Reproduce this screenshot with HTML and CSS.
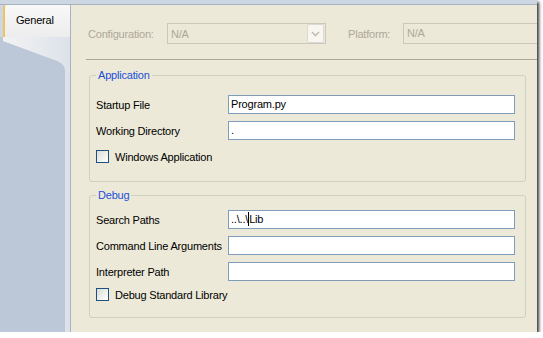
FILE: index.html
```html
<!DOCTYPE html>
<html lang="en">
<head>
  <meta charset="UTF-8" />
  <title>Project Properties - General</title>
  <link rel="stylesheet" href="styles.css">
</head>
<body>

  <div class="window">
    <!-- thin strip above the property page -->
    <div class="topbar"></div>

    <div class="frame">
      <!-- left tab column -->
      <aside class="side">
        <div class="tab">General</div>
        <svg class="tab-foot" width="70" height="36" viewBox="0 0 70 36">
          <defs>
            <linearGradient id="foot" x1="0" y1="0" x2="1" y2="0">
              <stop offset="0" stop-color="#f3f3f3" />
              <stop offset="1" stop-color="#dde2ea" />
            </linearGradient>
          </defs>
          <rect x="0" y="0" width="70" height="36" fill="url(#foot)" />
          <path d="M0 0 L3 0 L3 4 L57 24 Q65 27 65 34 L65 36 L0 36 Z" fill="#bcc8d8" />
        </svg>
        <div class="side-rest"></div>
      </aside>

      <!-- property page -->
      <main class="panel">
        <div class="config-row">
          <span class="dim-label conf">Configuration:</span>
          <div class="combo">
            <span>N/A</span>
            <span class="combo-btn">
              <svg width="9" height="6" viewBox="0 0 9 6"><path d="M1 1 L4.5 4.5 L8 1" fill="none" stroke="#c2bfb2" stroke-width="1.6" /></svg>
            </span>
          </div>
          <span class="dim-label plat">Platform:</span>
          <div class="dim-box">N/A</div>
        </div>

        <hr class="sep">

        <fieldset class="group app">
          <legend>Application</legend>
          <div class="field">
            <label>Startup File</label>
            <div class="box">Program.py</div>
          </div>
          <div class="field">
            <label>Working Directory</label>
            <div class="box">.</div>
          </div>
          <div class="check">
            <span class="cb"></span>
            <span>Windows Application</span>
          </div>
        </fieldset>

        <fieldset class="group debug">
          <legend>Debug</legend>
          <div class="field">
            <label>Search Paths</label>
            <div class="box">..\..\<span class="caret"></span>Lib</div>
          </div>
          <div class="field">
            <label>Command Line Arguments</label>
            <div class="box"></div>
          </div>
          <div class="field">
            <label>Interpreter Path</label>
            <div class="box"></div>
          </div>
          <div class="check">
            <span class="cb"></span>
            <span>Debug Standard Library</span>
          </div>
        </fieldset>
      </main>
    </div>
  </div>

</body>
</html>
```

FILE: styles.css
```css
/* Page */
body {
  margin: 0;
  background: #ffffff;
  font-family: "Liberation Sans", Arial, sans-serif;
  font-size: 11px;
  letter-spacing: -0.2px;
  color: #000000;
}
/* Window with drop shadow */
.window {
  width: 537px;
  height: 332px;
  display: flex;
  flex-direction: column;
  overflow: hidden;
  box-shadow: 2px 2px 3px rgba(0, 0, 0, 0.8);
}
.topbar {
  height: 4px;
  background: #cdd6e3;
  border-bottom: 1px solid #a9b2bf;
}
.frame {
  flex: 1;
  display: flex;
}
/* Left tab column */
.side {
  width: 70px;
  flex: none;
  display: flex;
  flex-direction: column;
  background: #cdd6e3;
  border-right: 1px solid #a8b3c3;
}
.tab {
  height: 23px;
  margin-left: 3px;
  padding: 9px 0 0 11px;
  border-left: 2px solid #f2c35c;
  border-top-left-radius: 3px;
  background: linear-gradient(#f8f8f8, #ededed);
  line-height: 13px;
}
.tab-foot {
  display: block;
}
.side-rest {
  flex: 1;
  background: #bcc8d8;
  border-right: 5px solid #dde2ea;
}
/* Property page */
.panel {
  flex: 1;
  min-width: 0;
  overflow: hidden;
  background: #ece9d8;
  padding: 18px 0 0 15px;
}
.config-row {
  display: flex;
  align-items: center;
  height: 21px;
  padding-left: 2px;
  white-space: nowrap;
  overflow: hidden;
}
.dim-label {
  color: #aca899;
  flex: none;
}
.conf {
  width: 79px;
}
.plat {
  width: 55px;
  margin-left: 22px;
}
.combo {
  width: 154px;
  height: 19px;
  flex: none;
  display: flex;
  align-items: center;
  justify-content: space-between;
  padding-left: 3px;
  border: 1px solid #cbc8bb;
  color: #aca899;
}
.combo-btn {
  width: 15px;
  height: 17px;
  margin-right: 1px;
  display: flex;
  align-items: center;
  justify-content: center;
  border: 1px solid #dcdacf;
  border-radius: 2px;
  background: #f7f6f1;
}
.dim-box {
  width: 150px;
  height: 19px;
  flex: none;
  padding-left: 3px;
  line-height: 19px;
  border: 1px solid #cbc8bb;
  color: #aca899;
}
.sep {
  margin: 15px 0 0 0;
  border: none;
  border-top: 1px solid #aca899;
}
/* Group boxes */
.group {
  min-width: 0;
  margin: 9px 11px 0 3px;
  padding: 13px 10px 18px 6px;
  border: 1px solid #d0d0bf;
  border-radius: 3px;
}
.group.debug {
  margin-top: 7px;
  padding: 8px 10px 16px 6px;
}
.group legend {
  padding: 0 2px;
  line-height: 13px;
  color: #1d4fd8;
}
.field {
  display: flex;
  align-items: center;
  height: 19px;
}
.field + .field {
  margin-top: 7px;
}
.field label {
  width: 132px;
  flex: none;
  white-space: nowrap;
}
.box {
  flex: 1;
  min-width: 0;
  height: 17px;
  padding-left: 2px;
  line-height: 17px;
  border: 1px solid #7f9db9;
  background: #ffffff;
  white-space: nowrap;
}
.caret {
  display: inline-block;
  width: 1px;
  height: 14px;
  vertical-align: -3px;
  background: #000000;
}
.check {
  display: flex;
  align-items: center;
  gap: 6px;
  height: 13px;
  margin-top: 10px;
}
.debug .check {
  margin-top: 7px;
}
.cb {
  width: 11px;
  height: 11px;
  border: 1px solid #1c5180;
  background: linear-gradient(135deg, #dcdcd5, #ffffff);
}
```
